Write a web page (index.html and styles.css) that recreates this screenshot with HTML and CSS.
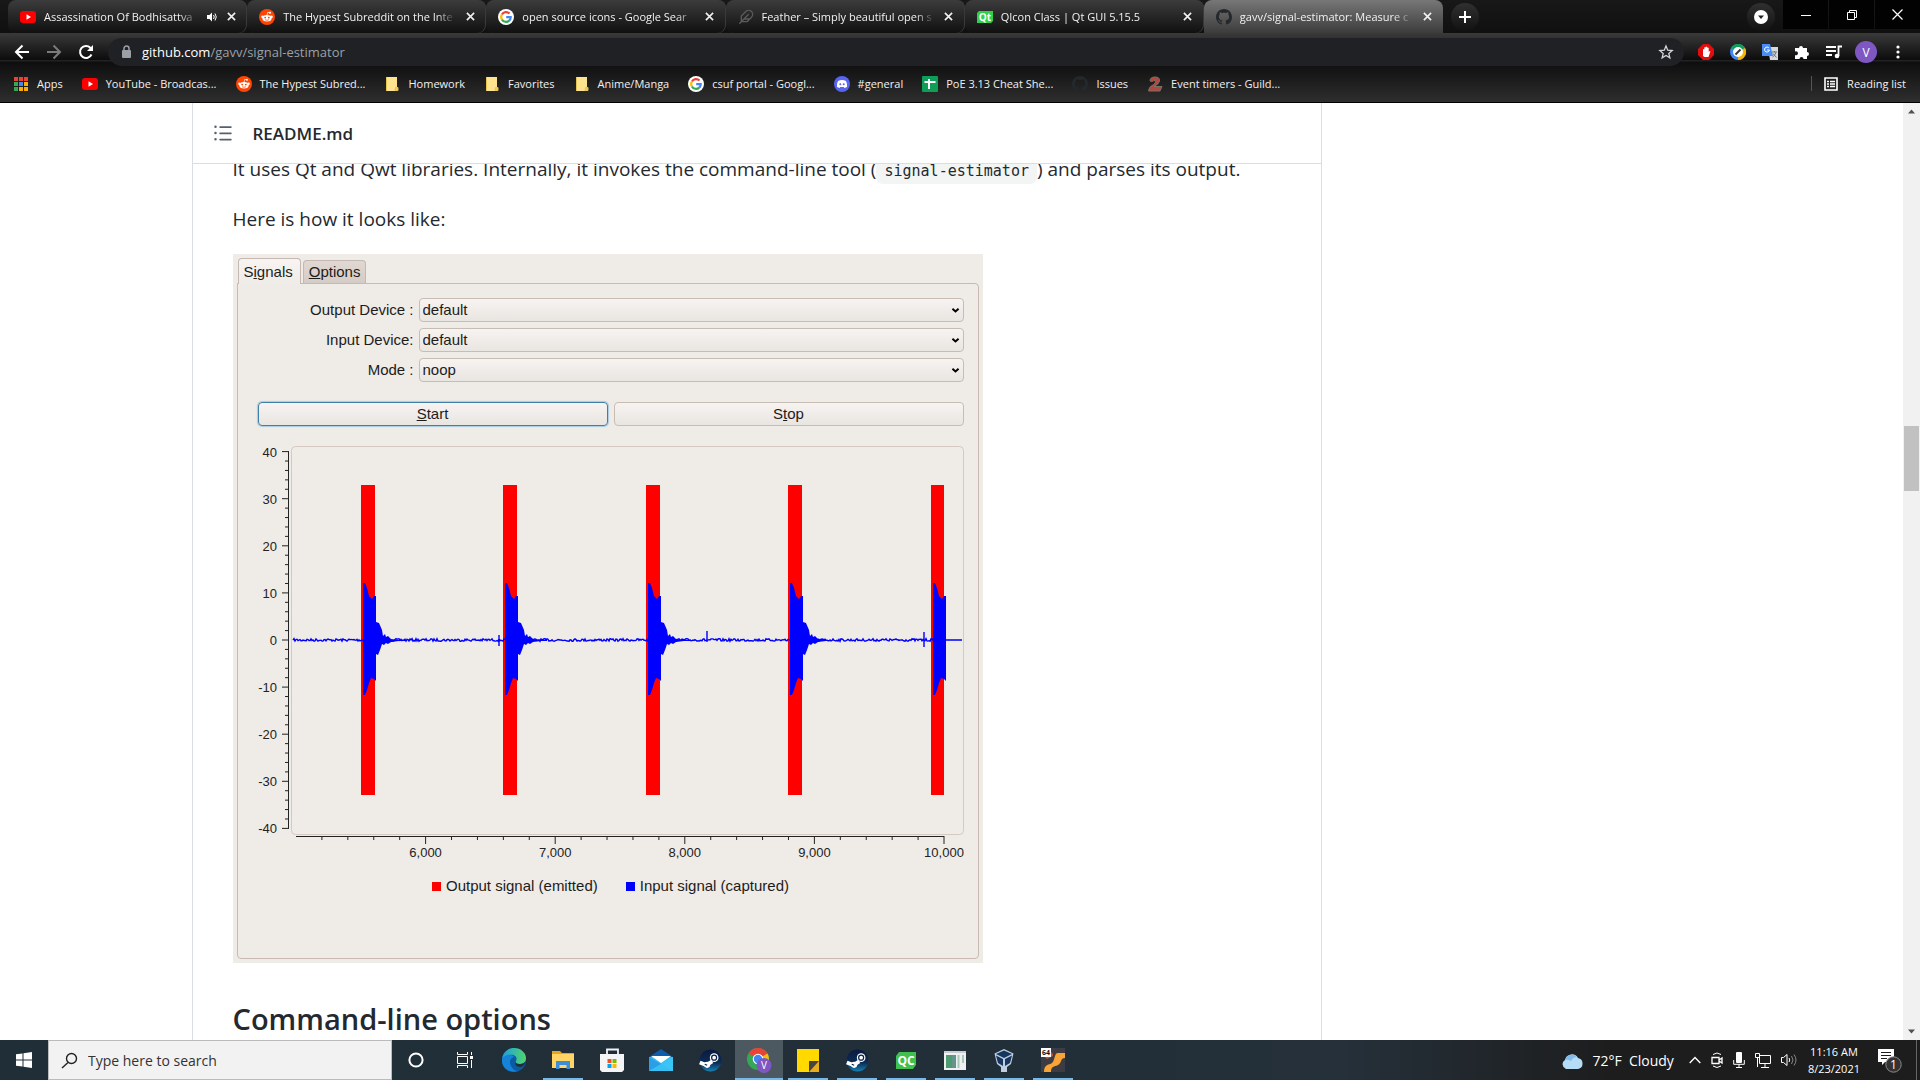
FILE: index.html
```html
<!DOCTYPE html>
<html lang="en">
<head>
<meta charset="utf-8">
<title>gavv/signal-estimator</title>
<link rel="stylesheet" href="styles.css">
</head>
<body>
<svg class="defs" aria-hidden="true">
  <symbol id="youtube" viewBox="0 0 16 16"><rect y="2" width="16" height="12" rx="3" fill="#f00"/><path d="M6.5 5.300v5.400L11 8z" fill="#fff"/></symbol>
  <symbol id="reddit" viewBox="0 0 16 16"><circle cx="8" cy="8" r="8" fill="#ff4500"/><g fill="#fff"><ellipse cx="8" cy="9.300" rx="4.600" ry="3.200"/><circle cx="3.400" cy="7.800" r="1.200"/><circle cx="12.600" cy="7.800" r="1.200"/><circle cx="11" cy="3.700" r="1"/></g><path d="M8 6.300l.7-3 2.300.5" fill="none" stroke="#fff" stroke-width=".7"/><circle cx="6.200" cy="8.600" r=".9" fill="#ff4500"/><circle cx="9.800" cy="8.600" r=".9" fill="#ff4500"/><path d="M6 10.700q2 1.300 4 0" fill="none" stroke="#ff4500" stroke-width=".7"/></symbol>
  <symbol id="google" viewBox="0 0 16 16"><circle cx="8" cy="8" r="8" fill="#fff"/><g fill="none" stroke-width="2.200"><path d="M11.500 4.600A4.800 4.800 0 0 0 3.900 5.500" stroke="#ea4335"/><path d="M3.900 5.500a4.800 4.800 0 0 0 0 5" stroke="#fbbc05"/><path d="M3.900 10.500a4.800 4.800 0 0 0 7.300 1.100" stroke="#34a853"/><path d="M11.200 11.600a4.800 4.800 0 0 0 1.500-3.400H8.200" stroke="#4285f4"/></g></symbol>
  <symbol id="feather" viewBox="0 0 24 24"><path d="M20.240 12.240a6 6 0 0 0-8.490-8.490L5 10.500V19h8.500zM16 8L2 22M17.500 15H9" fill="none" stroke="#5b5b5b" stroke-width="2" stroke-linejoin="round"/></symbol>
  <symbol id="github" viewBox="0 0 16 16"><path fill-rule="evenodd" fill="currentColor" d="M8 0C3.580 0 0 3.580 0 8c0 3.540 2.290 6.530 5.470 7.590.4.070.55-.17.55-.38 0-.19-.01-.82-.01-1.490-2.010.37-2.530-.49-2.690-.94-.09-.23-.48-.94-.82-1.130-.28-.15-.68-.52-.01-.53.63-.01 1.080.58 1.230.82.72 1.210 1.870.87 2.330.66.070-.52.28-.87.51-1.070-1.780-.2-3.640-.89-3.640-3.950 0-.87.31-1.590.82-2.150-.08-.2-.36-1.020.08-2.120 0 0 .67-.21 2.200.82.64-.18 1.320-.27 2-.27s1.360.09 2 .27c1.530-1.040 2.200-.82 2.200-.82.44 1.100.16 1.920.08 2.120.51.56.82 1.270.82 2.150 0 3.070-1.870 3.750-3.650 3.950.29.25.54.73.54 1.480 0 1.070-.01 1.930-.01 2.200 0 .21.15.46.55.38A8.010 8.010 0 0 0 16 8c0-4.420-3.580-8-8-8z"/></symbol>
  <symbol id="close" viewBox="0 0 10 10"><path d="M1 1l8 8M9 1L1 9" stroke="#f1f1f1" stroke-width="1.800"/></symbol>
  <symbol id="folder" viewBox="0 0 16 16"><path d="M2 1h11v10l1 1v3H2z" fill="#ffe48f"/><path d="M2.500 1v14M11 14.500h3V11.500h-2.500z" stroke="#e8c350" fill="#f3cf62"/></symbol>
  <symbol id="steam" viewBox="0 0 24 24"><linearGradient id="sg" x2="0" y2="1"><stop stop-color="#0a1a3e"/><stop offset=".6" stop-color="#0c2c55"/><stop offset="1" stop-color="#1682b5"/></linearGradient><circle cx="12" cy="12" r="11.500" fill="url(#sg)"/><path d="M.8 14l7 2.800 6-3.800" fill="none" stroke="#fff" stroke-width="4"/><circle cx="8.500" cy="16.500" r="3.200" fill="#fff"/><circle cx="15.800" cy="9" r="4.500" fill="#fff"/><circle cx="15.800" cy="9" r="2.600" fill="none" stroke="#0b2147" stroke-width="1.300"/><path d="M6 16l2.500 1" stroke="#0b2147" stroke-width="1.200"/></symbol>
  <symbol id="chev" viewBox="0 0 10 8"><path d="M1.500 2L5 5.200 8.500 2" fill="none" stroke="#000" stroke-width="2.200"/></symbol>
</svg>

<header class="browser">
  <div class="strip">
    <nav class="tabs" aria-label="Tabs">
      <div class="tab"><svg class="ic16"><use href="#youtube"/></svg><span class="title">Assassination Of Bodhisattva</span><svg class="ic10" viewBox="0 0 10 10"><path d="M0 3h2.500L5 .5v9L2.500 7H0z" fill="#fff"/><path d="M6.500 3q1.500 2 0 4M8 1.500q2.500 3.500 0 7" fill="none" stroke="#fff"/></svg><button class="x" aria-label="Close tab"><svg><use href="#close"/></svg></button></div>
      <div class="tab"><svg class="ic16"><use href="#reddit"/></svg><span class="title">The Hypest Subreddit on the Inte</span><button class="x" aria-label="Close tab"><svg><use href="#close"/></svg></button></div>
      <div class="tab"><svg class="ic16"><use href="#google"/></svg><span class="title">open source icons - Google Sear</span><button class="x" aria-label="Close tab"><svg><use href="#close"/></svg></button></div>
      <div class="tab"><svg class="ic16"><use href="#feather"/></svg><span class="title">Feather – Simply beautiful open s</span><button class="x" aria-label="Close tab"><svg><use href="#close"/></svg></button></div>
      <div class="tab"><svg class="ic16" viewBox="0 0 16 16"><path d="M2 2h14v10l-2 2H0V4z" fill="#2fd14a"/><text x="8" y="12" font-size="10" font-weight="700" fill="#fff" text-anchor="middle">Qt</text></svg><span class="title">QIcon Class | Qt GUI 5.15.5</span><button class="x" aria-label="Close tab"><svg><use href="#close"/></svg></button></div>
      <div class="tab active"><svg class="ic16"><use href="#github"/></svg><span class="title">gavv/signal-estimator: Measure c</span><button class="x" aria-label="Close tab"><svg><use href="#close"/></svg></button></div>
    </nav>
    <button class="round" aria-label="New tab"><svg width="12" height="12"><path d="M6 0v12M0 6h12" stroke="#fff" stroke-width="2"/></svg></button>
    <button class="round search-tabs" aria-label="Search tabs"><svg width="14" height="14"><circle cx="7" cy="7" r="7" fill="#fff"/><path d="M4 5.500h6L7 9z" fill="#222"/></svg></button>
    <div class="winbtns">
      <button aria-label="Minimize"><svg width="10" height="10"><path d="M0 5.500h10" stroke="#fff"/></svg></button>
      <button aria-label="Restore"><svg width="10" height="10"><path d="M.5 2.500h7v7h-7zM2.500 2V.5h7v7H8" fill="none" stroke="#fff"/></svg></button>
      <button aria-label="Close"><svg width="11" height="11"><path d="M.5 .5l10 10M10.500 .5l-10 10" stroke="#fff" stroke-width="1.200"/></svg></button>
    </div>
  </div>
  <div class="bars">
    <div class="toolbar">
      <button class="tool" aria-label="Back"><svg width="16" height="16"><path d="M15 8H2M8.500 1.500L2 8l6.500 6.500" fill="none" stroke="#fff" stroke-width="2"/></svg></button>
      <button class="tool" aria-label="Forward"><svg width="16" height="16"><path d="M1 8h13M7.500 1.500L14 8l-6.500 6.500" fill="none" stroke="#7b7b7b" stroke-width="2"/></svg></button>
      <button class="tool" aria-label="Reload"><svg width="16" height="16"><path d="M13.500 10.500A6 6 0 1 1 12.300 3.700L14 5.500" fill="none" stroke="#fff" stroke-width="2"/><path d="M15 1v6H9z" fill="#fff"/></svg></button>
      <div class="omnibox">
        <svg width="10" height="14"><rect y="5" width="9" height="8" rx="1" fill="#9aa0a6"/><path d="M2 6V3.500a2.500 2.500 0 0 1 5 0V6" fill="none" stroke="#9aa0a6" stroke-width="1.500"/></svg>
        <span class="url"><b>github.com</b>/gavv/signal-estimator</span>
        <svg width="16" height="16" viewBox="0 0 24 24"><path d="M12 3l2.600 6.200 6.700.6-5.100 4.400 1.600 6.600L12 17.300l-5.800 3.500 1.600-6.600L2.700 9.800l6.700-.6z" fill="none" stroke="#d5d7da" stroke-width="1.900"/></svg>
      </div>
      <button class="tool" aria-label="Ad blocker"><svg width="16" height="16"><path d="M5 0h6l5 5v6l-5 5H5l-5-5V5z" fill="#e40d0d"/><path d="M5 12V5.500q.8-1 1.300 0V3.500q.8-1 1.500 0V3q.8-1 1.500 0v1q.8-1 1.400 0v4l1-1q1 .2.500 1L10.500 13h-4z" fill="#fff"/></svg></button>
      <button class="tool" aria-label="Color picker"><svg width="16" height="16"><circle cx="8" cy="8" r="8" fill="#4285f4"/><path d="M8 8L1 4a8 8 0 0 1 14 0z" fill="#0f9d58"/><path d="M8 8l7-4a8 8 0 0 1-7 12z" fill="#f4b400"/><circle cx="8" cy="8" r="5" fill="#fff"/><path d="M5.500 10.500l5-5" stroke="#333" stroke-width="2"/></svg></button>
      <button class="tool" aria-label="Translate"><svg width="16" height="16"><path d="M6 3h10v13H8z" fill="#d7dadd"/><path d="M0 0h8l3 12H0z" fill="#4a8cf5"/><path d="M7.500 6H5M7 4a2.500 2.500 0 1 0 .5 2" stroke="#fff" fill="none"/><path d="M10 8h5M12.500 7v1M14 8q-1 4-3.500 5M11 9.500l3.500 4" stroke="#6e7478" fill="none"/></svg></button>
      <button class="tool" aria-label="Extensions"><svg width="16" height="16"><path d="M1 4h4a2 2 0 1 1 4 0h4v4a2 2 0 1 1 0 4v3H9.500a2 2 0 1 0-4 0H1v-4a2 2 0 1 0 0-3.500z" fill="#fff"/></svg></button>
      <button class="tool" aria-label="Media"><svg width="16" height="14"><path d="M0 2h10M0 6h10M0 10h6M12.500 11V1.500H16" fill="none" stroke="#fff" stroke-width="1.800"/><circle cx="11" cy="11" r="2.300" fill="#fff"/></svg></button>
      <button class="tool avatar" aria-label="Profile">V</button>
      <button class="tool" aria-label="Menu"><svg width="4" height="14"><g fill="#fff"><circle cx="2" cy="2" r="1.600"/><circle cx="2" cy="7" r="1.600"/><circle cx="2" cy="12" r="1.600"/></g></svg></button>
    </div>
    <nav class="bookmarks" aria-label="Bookmarks">
      <a href="#"><svg class="ic16" viewBox="0 0 16 16"><path d="M1 1h4v4H1zM6 1h4v4H6zM11 1h4v4h-4z" fill="#ea4335"/><path d="M1 6h4v4H1z" fill="#34a853"/><path d="M6 6h4v4H6z" fill="#4285f4"/><path d="M11 6h4v4h-4zM6 11h4v4H6zM11 11h4v4h-4z" fill="#fbab05"/><path d="M1 11h4v4H1z" fill="#34a853"/><path d="M5.500 0v16M10.500 0v16M0 5.500h16M0 10.500h16" stroke="#1d1d1d"/></svg>Apps</a>
      <a href="#"><svg class="ic16"><use href="#youtube"/></svg>YouTube - Broadcas...</a>
      <a href="#"><svg class="ic16"><use href="#reddit"/></svg>The Hypest Subred...</a>
      <a href="#"><svg class="ic16"><use href="#folder"/></svg>Homework</a>
      <a href="#"><svg class="ic16"><use href="#folder"/></svg>Favorites</a>
      <a href="#"><svg class="ic16"><use href="#folder"/></svg>Anime/Manga</a>
      <a href="#"><svg class="ic16"><use href="#google"/></svg>csuf portal - Googl...</a>
      <a href="#"><svg class="ic16" viewBox="0 0 16 16"><circle cx="8" cy="8" r="8" fill="#5865f2"/><path d="M4 5q4-2 8 0 1.500 3 1 6l-2.500 1-.8-1H6.300l-.8 1L3 11q-.5-3 1-6z" fill="#fff"/><circle cx="6.300" cy="8.300" r="1" fill="#5865f2"/><circle cx="9.700" cy="8.300" r="1" fill="#5865f2"/></svg>#general</a>
      <a href="#"><svg class="ic16" viewBox="0 0 16 16"><rect width="16" height="16" rx="1" fill="#0f9d58"/><path d="M7 3v10M2.500 6h11" stroke="#fff" stroke-width="2"/></svg>PoE 3.13 Cheat She...</a>
      <a href="#"><svg class="ic16 faint"><use href="#github"/></svg>Issues</a>
      <a href="#"><svg class="ic16" viewBox="0 0 16 16"><path d="M3 5q0-4 5-4t4.500 4Q12 8 7 10.500h8L13 15H1.500q0-4 5-6.500 2.500-1.500 2-3.500-1.500-1.500-3 .5z" fill="#b2493a" stroke="#77716e"/></svg>Event timers - Guild...</a>
      <a href="#" class="reading"><svg width="14" height="14"><path d="M1 1h12v12H1z" fill="none" stroke="#fff" stroke-width="1.600"/><path d="M3 4.500h2M6 4.500h5M3 7h2M6 7h5M3 9.500h2M6 9.500h5" stroke="#fff" stroke-width="1.300"/></svg>Reading list</a>
    </nav>
  </div>
</header>

<div class="viewport">
  <main class="container">
    <section class="readme">
      <div class="readme-head">
        <svg width="20" height="20" viewBox="0 0 16 16" fill="#57606a"><path d="M2 4a1 1 0 1 0 0-2 1 1 0 0 0 0 2zm3.750-1.500a.75.75 0 0 0 0 1.500h8.500a.75.75 0 0 0 0-1.500zm0 5a.75.75 0 0 0 0 1.500h8.500a.75.75 0 0 0 0-1.500zm0 5a.75.75 0 0 0 0 1.500h8.500a.75.75 0 0 0 0-1.500zM3 8a1 1 0 1 1-2 0 1 1 0 0 1 2 0zm-1 6a1 1 0 1 0 0-2 1 1 0 0 0 0 2z"/></svg>
        <strong>README.md</strong>
      </div>
      <article class="article">
        <p>It uses Qt and Qwt libraries. Internally, it invokes the command-line tool (<code>signal-estimator</code>) and parses its output.</p>
        <p>Here is how it looks like:</p>
        <div class="app">
          <div class="app-tabs"><button class="app-tab current">S<u>i</u>gnals</button><button class="app-tab"><u>O</u>ptions</button></div>
          <div class="app-body">
            <form class="fields">
              <label for="out">Output Device :</label><span class="combo"><select id="out"><option>default</option></select><svg><use href="#chev"/></svg></span>
              <label for="in">Input Device:</label><span class="combo"><select id="in"><option>default</option></select><svg><use href="#chev"/></svg></span>
              <label for="mode">Mode :</label><span class="combo"><select id="mode"><option>noop</option></select><svg><use href="#chev"/></svg></span>
            </form>
            <div class="actions"><button class="btn focus"><u>S</u>tart</button><button class="btn">S<u>t</u>op</button></div>
            <svg class="chart" id="chart" viewBox="0 0 706 424" role="img" aria-label="Signal plot"></svg>
            <div class="legend"><span><i class="red"></i>Output signal (emitted)</span><span><i class="blue"></i>Input signal (captured)</span></div>
          </div>
        </div>
        <h2>Command-line options</h2>
      </article>
    </section>
  </main>
  <div class="scroll" aria-hidden="true">
    <svg width="17" height="17"><path d="M5 10.500h7L8.500 6.500z" fill="#505050"/></svg>
    <div class="track"><div class="thumb"></div></div>
    <svg width="17" height="17"><path d="M5 6.500h7L8.500 10.500z" fill="#505050"/></svg>
  </div>
</div>

<footer class="taskbar">
  <button class="start" aria-label="Start"><svg width="16" height="16"><path d="M0 2.300L6.500 1.400V7.500H0zM7.500 1.200L16 0v7.500H7.500zM0 8.500h6.500v6.100L0 13.700zM7.500 8.500H16V16l-8.500-1.200z" fill="#fff"/></svg></button>
  <label class="find"><svg width="17" height="17"><circle cx="10.500" cy="6.500" r="5" fill="none" stroke="#222" stroke-width="1.400"/><path d="M7 10.500L1 16" stroke="#222" stroke-width="1.400"/></svg><input type="text" placeholder="Type here to search" aria-label="Search"></label>
  <div class="apps">
    <button aria-label="Cortana"><svg width="16" height="16"><circle cx="8" cy="8" r="6.600" fill="none" stroke="#fff" stroke-width="2"/></svg></button>
    <button aria-label="Task view"><svg width="16" height="16"><path d="M.5 4.500h10v7H.5zM.5 0v2.500h10V0M.5 16v-2.500h10V16M14.500 0v3M14.500 8v8" fill="none" stroke="#fff"/><path d="M13 4h3v3h-3z" fill="#fff"/></svg></button>
    <button aria-label="Edge"><svg width="24" height="24"><linearGradient id="e1"><stop stop-color="#1b9de2"/><stop offset="1" stop-color="#52d668"/></linearGradient><circle cx="12" cy="12" r="12" fill="#0c59a4"/><path d="M0 11C1 4 6 0 12 0c7 0 12 5 12 10 0 4-3 6-6 6-4 0-5-1.500-4-3 2-4-2-7-6-6-3 .6-6 2-8 4z" fill="url(#e1)"/><path d="M0 11c2-4 10-6 12-2-4 1-5 5-3 9 1.500 3 4 5 7 5C8 26-1 20 0 11z" fill="#1583d8"/><path d="M14 13c-1 1.500 0 3 4 3 2 0 4-.7 5.300-2-1 3-3 5-5 5-4 0-6-3-4.300-6z" fill="#202e38"/></svg></button>
    <button class="open more" aria-label="File Explorer"><svg width="22" height="20"><path d="M0 1h8l2 2h12v15H0z" fill="#e6a51a"/><path d="M0 4h22v14H0z" fill="#ffd666"/><path d="M4 19v-8h14v8h-3.500v-4h-7v4z" fill="#3c8fd6"/></svg></button>
    <button aria-label="Store"><svg width="24" height="24"><path d="M7 7V1.500h11V7" fill="none" stroke="#f3f3f3" stroke-width="1.800"/><path d="M0 6h24v16l-2 2H2l-2-2z" fill="#f5f5f5"/><path d="M7.500 11h4v4h-4z" fill="#f25022"/><path d="M12.500 11h4v4h-4z" fill="#7fba00"/><path d="M7.500 16h4v4h-4z" fill="#00a4ef"/><path d="M12.500 16h4v4h-4z" fill="#ffb900"/></svg></button>
    <button aria-label="Mail"><svg width="24" height="22"><path d="M0 8l12-8 12 8v3H0z" fill="#0f5cab"/><path d="M0 8h24v14H0z" fill="#35bdf2"/><path d="M0 8l24 14H0z" fill="#2a9fe6"/><path d="M24 8L11 15.500 0 22h24z" fill="#3cc7f7" opacity=".8"/><path d="M2 7h20L12 14z" fill="#fff"/></svg></button>
    <button aria-label="Steam"><svg width="23" height="23"><use href="#steam"/></svg></button>
    <button class="open active" aria-label="Chrome"><svg width="26" height="26"><circle cx="12" cy="12" r="11" fill="#34a853"/><path d="M12 12L2.500 6.500a11 11 0 0 1 19 0z" fill="#ea4335"/><path d="M12 12l9.500-5.500A11 11 0 0 1 12 23z" fill="#fbbc05"/><circle cx="12" cy="12" r="5.300" fill="#fff"/><circle cx="12" cy="12" r="4.200" fill="#4285f4"/><circle cx="18" cy="18.500" r="7.500" fill="#7e57c2"/><text x="18" y="22" font-size="10" fill="#fff" text-anchor="middle">V</text></svg></button>
    <button class="open" aria-label="Sticky Notes"><svg width="22" height="23"><path d="M0 0h22v23H0z" fill="#ffd900"/><path d="M12 12h10v11H12z" fill="#e9ac1d"/><path d="M12 12h10L12 23z" fill="#444"/></svg></button>
    <button class="open" aria-label="Steam window"><svg width="23" height="23"><use href="#steam"/></svg></button>
    <button class="open" aria-label="Qt Creator"><svg width="20" height="17"><path d="M3 0h17v13l-3 4H0V4z" fill="#3fc04f"/><text x="10" y="13" font-size="12" font-weight="700" fill="#fff" text-anchor="middle">QC</text></svg></button>
    <button class="open" aria-label="Application"><svg width="22" height="19"><path d="M0 0h22v19H0z" fill="#f0f0f0"/><path d="M0 0h22v2H0z" fill="#c9ccd0"/><path d="M2 4h10v13H2z" fill="#66938c"/><path d="M2 4h6v13H2z" fill="#4d9b70"/><path d="M14.500 4v13M19 4v8" stroke="#a8c8bb" stroke-width="2"/></svg></button>
    <button class="open" aria-label="VirtualBox"><svg width="22" height="25"><path d="M11 1l9.500 4.500L18 16l-4 3v5H8v-5l-4-3L1.500 5.500z" fill="#bfcde0"/><path d="M11 2.500L19 6l-8 4-8-4z" fill="#16365f"/><path d="M3 7.500l7 3.500v7l-5-3zM19 7.500L12 11v7l5-3z" fill="#16365f"/></svg></button>
    <button class="open" aria-label="Game"><svg width="24" height="24"><path d="M0 0h24v24H0z" fill="#3d3b44"/><path d="M6 11a4 4 0 1 1 6-3z" fill="#d94d16"/><path d="M3 24c0-8 5-7 8-9s2-10 6-10h7v5c-5 0-3 5-7 7s-7 1-7 7z" fill="#f8a536"/><path d="M0 0h10v9H0z" fill="#fff"/><text x="5" y="7" font-size="7" font-weight="700" text-anchor="middle" fill="#111">64</text></svg></button>
  </div>
  <div class="tray">
    <div class="weather"><svg width="22" height="17"><path d="M5 17a5 5 0 0 1-1-9 7 7 0 0 1 13-2 5.600 5.600 0 0 1 0 11z" fill="#b7dcf7"/><path d="M4 8a7 7 0 0 1 12-3q-4 0-6 4-3-2-6-1z" fill="#7fbcec"/></svg><span>72°F&nbsp; Cloudy</span></div>
    <svg width="12" height="8"><path d="M.7 7L6 1.500 11.300 7" fill="none" stroke="#fff" stroke-width="1.400"/></svg>
    <svg width="12" height="16"><path d="M1 5.500h7v6H1zM8 8l3-2v5L8 9" fill="none" stroke="#fff" stroke-width="1.300"/><path d="M2 2.500q4-3 8 0M2 14q4 3 8 0" fill="none" stroke="#fff"/></svg>
    <svg width="12" height="16"><rect x="3" width="6" height="11" rx="1" fill="#fff"/><path d="M.7 8v4.300h10.600V8M6 12v3M3 15.500h6" fill="none" stroke="#fff"/></svg>
    <svg width="16" height="15"><path d="M4.500 2.500h11v8h-11zM10 11v3M6 14.500h8M.5 .5h4v4h-4zM2.500 5v9" fill="none" stroke="#fff"/></svg>
    <svg width="17" height="14"><path d="M.5 4.500h2L6 1.500v11L2.500 9.500h-2z" fill="none" stroke="#fff"/><path d="M8 5q1.500 2 0 4" fill="none" stroke="#fff"/><path d="M10.500 3q3 4 0 8M13 1.500q4 5.500 0 11" fill="none" stroke="#888"/></svg>
    <div class="clock"><span>11:16 AM</span><span>8/23/2021</span></div>
    <button class="notes" aria-label="Notifications"><svg width="24" height="25"><path d="M0 1h16v13H7l-3 3v-3H0z" fill="#fff"/><path d="M3 4.500h10M3 7.500h10M3 10.500h6" stroke="#1c1c1c"/><circle cx="15.500" cy="16.500" r="7.700" fill="#333" stroke="#8a8a8a"/><text x="15.500" y="21" font-size="12" fill="#fff" text-anchor="middle">1</text></svg></button>
    <div class="peek"></div>
  </div>
</footer>
<script src="script.js"></script>
</body>
</html>
```
FILE: styles.css
```css
* { box-sizing: border-box; }
body { margin: 0; height: 100vh; display: flex; flex-direction: column; overflow: hidden; background: #fff; font-family: "Open Sans", "Noto Sans", sans-serif; color: #24292f; }
button { border: 0; padding: 0; background: none; font: inherit; color: inherit; display: flex; align-items: center; justify-content: center; }
a { color: inherit; text-decoration: none; }
svg { display: block; flex: none; }
.defs { position: absolute; width: 0; height: 0; }
.ic16 { width: 16px; height: 16px; }
.ic10 { width: 10px; height: 10px; }

.browser { flex: none; background: #151515; color: #f1f1f1; font-size: 11px; border-bottom: 1px solid #000; }
.strip { display: flex; align-items: center; height: 33px; padding-left: 8px; background: linear-gradient(#181818, #101010); }
.tabs { display: flex; align-self: stretch; flex: 0 1 1435px; min-width: 0; }
.tab { flex: 1 1 0; min-width: 0; display: flex; align-items: center; gap: 8px; padding: 0 10px 0 12px; border-radius: 8px; background: linear-gradient(#3c3c3c, #101010); box-shadow: inset -1px 0 #3a3a3a; }
.tab .title { flex: 1; min-width: 0; overflow: hidden; white-space: nowrap; mask-image: linear-gradient(to right, #000 calc(100% - 20px), transparent); }
.tab.active { background: linear-gradient(#777, #3c3c3c); border-radius: 8px 8px 0 0; box-shadow: none; }
.tab .ic16 { color: #24292e; }
.x { width: 12px; height: 16px; }
.x svg { width: 9px; height: 9px; }
.round { flex: none; width: 28px; height: 28px; margin-left: 8px; border-radius: 50%; background: linear-gradient(#303030, #121212); }
.search-tabs { margin: 0 8px 0 auto; }
.winbtns { display: flex; align-self: flex-start; gap: 1px; }
.winbtns button { width: 45px; height: 29px; background: #020202; }
.bars { background: linear-gradient(#3a3a3a, #0c0c0c 27px, #222 27px, #222 28px, #0e0e0e 29px, #2e2e2e); }
.toolbar { display: flex; align-items: center; height: 38px; padding: 0 6px; }
.tool { flex: none; width: 32px; height: 28px; }
.omnibox { flex: 1; display: flex; align-items: center; gap: 10px; height: 28px; margin: 0 6px; padding: 0 10px 0 14px; border-radius: 14px; background: #202124; color: #9aa0a6; font-size: 13px; }
.url { flex: 1; }
.url b { font-weight: 400; color: #fff; }
.avatar { width: 22px; height: 22px; margin: 0 5px; border-radius: 50%; background: #7e57c2; color: #fff; font-size: 12px; }
.bookmarks { display: flex; align-items: center; gap: 19px; height: 31px; padding: 0 14px 6px 13px; }
.bookmarks a { display: flex; align-items: center; gap: 8px; white-space: nowrap; }
.faint { color: #24292e; }
.bookmarks .reading { gap: 9px; margin-left: auto; padding-left: 12px; border-left: 1px solid #555; }

.viewport { flex: 1; min-height: 0; display: flex; overflow: hidden; }
.container { flex: 1; max-width: 1600px; margin: 0 auto; padding: 0 430px 0 40px; height: 100%; overflow: hidden; }
.readme { height: 100%; border: 1px solid #d8dee4; border-width: 0 1px; overflow: hidden; }
.readme-head { position: relative; z-index: 1; display: flex; align-items: center; gap: 20px; height: 61px; padding-left: 20px; background: #fff; border-bottom: 1px solid #d8dee4; font-size: 17px; }
.readme-head strong { font-weight: 600; }
.article { margin-top: -10px; padding: 0 40px; font-size: 19px; line-height: 30px; }
.article p { margin: 0 0 20px; }
.article h2 { margin: 36px 0 0; font-size: 29px; line-height: 40px; font-weight: 600; }
code { padding: 4px 8px; border-radius: 7px; background: #f3f5f5; font: 15px "DejaVu Sans Mono", monospace; }

.app { max-width: 750px; padding: 4px; background: #efebe7; color: #1c1c1c; font: 15px/18px "Liberation Sans", sans-serif; }
.app-tabs { display: flex; align-items: flex-end; gap: 2px; padding-left: 1px; }
.app-tab { height: 23px; padding: 0 5px; border: 1px solid #c4b8b0; border-bottom: 0; border-radius: 4px 4px 0 0; background: linear-gradient(#e0d8d3, #d6ccc6); display: block; }
.app-tab.current { height: 26px; margin-bottom: -1px; padding-right: 7px; background: linear-gradient(#f7f4f2, #efebe7); position: relative; }
.app-body { min-height: 676px; padding: 14px 14px 14px 20px; border: 1px solid #c8bab0; border-radius: 0 4px 4px 4px; }
.fields { display: grid; grid-template-columns: 156px 1fr; gap: 6px 5px; align-items: center; }
.fields label { text-align: right; }
.combo { display: grid; align-items: center; }
.combo > * { grid-area: 1 / 1; }
.combo svg { width: 9px; height: 7px; justify-self: end; margin-right: 4px; pointer-events: none; }
.combo select { width: 100%; height: 24px; padding: 0 3px; appearance: none; border: 1px solid #c8bdb5; border-radius: 4px; background: linear-gradient(#f7f3f1, #e9e5e1); font: inherit; color: inherit; }
.actions { display: grid; grid-template-columns: 1fr 1fr; gap: 6px; margin-top: 20px; }
.btn { display: block; height: 24px; border: 1px solid #c8bdb5; border-radius: 4px; background: linear-gradient(#f7f3f1, #e9e5e1); }
.btn.focus { border-color: #3f7fa8; box-shadow: 0 0 1px 1px #a9cbe0; }
.chart { width: 100%; height: auto; margin-top: 14px; font-size: 13px; }
.legend { display: flex; justify-content: center; gap: 28px; margin-top: 13px; }
.legend span { display: flex; align-items: center; gap: 5px; }
.legend i { width: 9px; height: 9px; }
.red { background: #f00; }
.blue { background: #00f; }

.scroll { flex: none; width: 17px; display: flex; flex-direction: column; background: #f1f1f1; }
.track { flex: 1; padding: 0 1px; }
.thumb { height: 65px; margin-top: 306px; background: #c1c1c1; }

.taskbar { flex: none; display: flex; align-items: stretch; height: 40px; background: linear-gradient(to right, #202e38, #222f38 60%, #25303a 70%, #1d1d1d 84%); color: #fff; }
.start { width: 48px; }
.find { display: flex; align-items: center; gap: 10px; width: 344px; padding-left: 12px; background: #f2f2f2; border: 1px solid #bbb; }
.find input { flex: 1; min-width: 0; border: 0; padding: 0; background: none; outline: 0; font: 14px "Open Sans", sans-serif; }
.find input::placeholder { color: #333; opacity: 1; }
.apps { display: flex; gap: 1px; }
.apps button { width: 48px; }
.apps .open { width: 40px; margin: 0 4px; border-bottom: 2px solid #76b9ed; padding-top: 2px; }
.apps .open.active { width: 48px; margin: 0; background: #4d5961; }
.tray { display: flex; align-items: center; gap: 10px; margin-left: auto; }
.weather { display: flex; align-items: center; gap: 9px; margin-right: 5px; font-size: 14px; }
.clock { display: flex; flex-direction: column; align-items: center; font-size: 11px; line-height: 17px; }
.notes { margin-left: 8px; }
.peek { width: 4px; align-self: stretch; border-left: 1px solid #666; margin-left: 4px; }
```
FILE: script.js
```js
const NS = "http://www.w3.org/2000/svg";
const chart = document.getElementById("chart");
const put = (name, attrs, text) => {
  const el = document.createElementNS(NS, name);
  for (const k in attrs) el.setAttribute(k, attrs[k]);
  if (text) el.textContent = text;
  chart.appendChild(el);
};
const yOf = v => 200 - v * 4.71;
const xOf = t => 38 + (t - 5000) * 0.1296;

// plot frame and axes
put("rect", { x: 33.5, y: 6.5, width: 672, height: 388, rx: 4, fill: "none", stroke: "#d5c9c1" });
let axis = `M30.5 ${yOf(40)}V${yOf(-40)}M38 396.500H${xOf(10000)}`;
for (let v = -40; v <= 40; v += 2) axis += `M${v % 10 ? 27 : 24} ${yOf(v)}H31`;
for (let t = 5200; t <= 10000; t += 200) axis += `M${xOf(t)} 396v${t % 1000 ? 4 : 8}`;
put("path", { d: axis, fill: "none", stroke: "#222" });
for (let v = -40; v <= 40; v += 10) put("text", { x: 19, y: yOf(v) + 5, "text-anchor": "end", fill: "#222" }, String(v));
for (let t = 6000; t <= 10000; t += 1000) put("text", { x: xOf(t), y: 417, "text-anchor": "middle", fill: "#222" }, t.toLocaleString("en-US"));

// emitted bursts
const starts = [103, 245, 388, 530, 673];
starts.forEach((x, i) => put("rect", { x, y: 45, width: i === 4 ? 13 : 14, height: 310, fill: "#f00" }));

// captured signal: background noise, bursts and their decay
let noise = "M35 200";
let seed = 7;
for (let x = 36; x < 676; x++) {
  seed = (seed * 16807) % 2147483647;
  noise += `L${x} ${(200 + (seed / 2147483647 - 0.5) * 2.6).toFixed(1)}`;
}
noise += "V200H704M241 195v11M449 191v11M666 192v15";
put("path", { d: noise, fill: "none", stroke: "#00f", "stroke-width": 1.4 });
starts.forEach((x, i) => {
  const tail = i === 4 ? "V241" : "V182l3 1 3 7 1 6 2-2 1 3 2-1 3 3 8 1h6v1h-6l-8 1-3 2-2-1-2 2-2-1-2 6-2 5-2-1V241";
  put("path", { d: `M${x + 2} 200V143h2l2 5 2 8 3 3 2-3h2${tail}l-2-2-3-1-2 5-2 7-2 5h-2z`, fill: "#00f" });
});
```
